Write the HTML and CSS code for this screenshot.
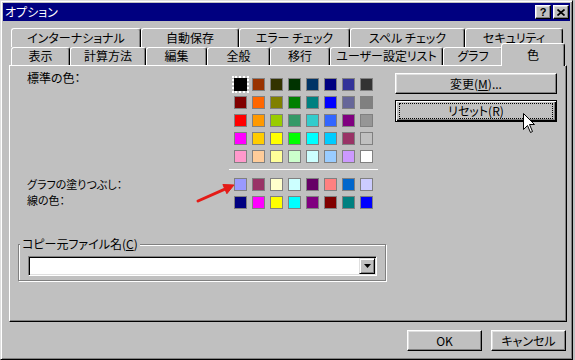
FILE: index.html
```html
<!DOCTYPE html>
<html lang="ja">
<head>
  <meta charset="UTF-8" />
  <title>オプション</title>
  <link rel="stylesheet" href="styles.css">
</head>
<body>
  <div class="window">
    <div class="titlebar">
      <span class="title">オプション</span>
      <div class="title-buttons">
        <span class="tb-btn help">?</span>
        <span class="tb-btn">
          <svg width="8" height="7" viewBox="0 0 8 7"><path d="M0.5 0.5L7.5 6.5M7.5 0.5L0.5 6.5" stroke="#000" stroke-width="1.7"/></svg>
        </span>
      </div>
    </div>

    <div class="tabs">
      <div class="tab-row row-back">
        <div class="tab">インターナショナル</div>
        <div class="tab">自動保存</div>
        <div class="tab">エラー チェック</div>
        <div class="tab">スペル チェック</div>
        <div class="tab">セキュリティ</div>
      </div>
      <div class="tab-row row-front">
        <div class="tab">表示</div>
        <div class="tab">計算方法</div>
        <div class="tab">編集</div>
        <div class="tab">全般</div>
        <div class="tab">移行</div>
        <div class="tab">ユーザー設定リスト</div>
        <div class="tab">グラフ</div>
        <div class="tab active">色</div>
      </div>
    </div>

    <div class="panel">
      <div class="std">
        <div class="label-col">標準の色：</div>
        <div class="swatches">
          <span class="sw sel" style="background:#000000"></span>
          <span class="sw" style="background:#993300"></span>
          <span class="sw" style="background:#333300"></span>
          <span class="sw" style="background:#003300"></span>
          <span class="sw" style="background:#003366"></span>
          <span class="sw" style="background:#000080"></span>
          <span class="sw" style="background:#333399"></span>
          <span class="sw" style="background:#333333"></span>
          <span class="sw" style="background:#800000"></span>
          <span class="sw" style="background:#ff6600"></span>
          <span class="sw" style="background:#808000"></span>
          <span class="sw" style="background:#008000"></span>
          <span class="sw" style="background:#008080"></span>
          <span class="sw" style="background:#0000ff"></span>
          <span class="sw" style="background:#666699"></span>
          <span class="sw" style="background:#808080"></span>
          <span class="sw" style="background:#ff0000"></span>
          <span class="sw" style="background:#ff9900"></span>
          <span class="sw" style="background:#99cc00"></span>
          <span class="sw" style="background:#339966"></span>
          <span class="sw" style="background:#33cccc"></span>
          <span class="sw" style="background:#3366ff"></span>
          <span class="sw" style="background:#800080"></span>
          <span class="sw" style="background:#969696"></span>
          <span class="sw" style="background:#ff00ff"></span>
          <span class="sw" style="background:#ffcc00"></span>
          <span class="sw" style="background:#ffff00"></span>
          <span class="sw" style="background:#00ff00"></span>
          <span class="sw" style="background:#00ffff"></span>
          <span class="sw" style="background:#00ccff"></span>
          <span class="sw" style="background:#993366"></span>
          <span class="sw" style="background:#c0c0c0"></span>
          <span class="sw" style="background:#ff99cc"></span>
          <span class="sw" style="background:#ffcc99"></span>
          <span class="sw" style="background:#ffff99"></span>
          <span class="sw" style="background:#ccffcc"></span>
          <span class="sw" style="background:#ccffff"></span>
          <span class="sw" style="background:#99ccff"></span>
          <span class="sw" style="background:#cc99ff"></span>
          <span class="sw" style="background:#ffffff"></span>
        </div>
        <div class="side">
          <button class="btn">変更(<u>M</u>)...</button>
          <button class="btn default"><span class="focus">リセット(R)</span></button>
        </div>
      </div>

      <div class="divider"></div>

      <div class="chart">
        <div class="label-col">
          <div>グラフの塗りつぶし：</div>
          <div>線の色：</div>
        </div>
        <div class="swatches">
          <span class="sw" style="background:#9999ff"></span>
          <span class="sw" style="background:#993366"></span>
          <span class="sw" style="background:#ffffcc"></span>
          <span class="sw" style="background:#ccffff"></span>
          <span class="sw" style="background:#660066"></span>
          <span class="sw" style="background:#ff8080"></span>
          <span class="sw" style="background:#0066cc"></span>
          <span class="sw" style="background:#ccccff"></span>
          <span class="sw" style="background:#000080"></span>
          <span class="sw" style="background:#ff00ff"></span>
          <span class="sw" style="background:#ffff00"></span>
          <span class="sw" style="background:#00ffff"></span>
          <span class="sw" style="background:#800080"></span>
          <span class="sw" style="background:#800000"></span>
          <span class="sw" style="background:#008080"></span>
          <span class="sw" style="background:#0000ff"></span>
        </div>
      </div>

      <div class="group">
        <span class="group-label">コピー元ファイル名(<u>C</u>)</span>
        <div class="combo">
          <span class="combo-btn">
            <svg width="7" height="4" viewBox="0 0 7 4"><path d="M0 0H7L3.5 4Z" fill="#000"/></svg>
          </span>
        </div>
      </div>

      <!-- red annotation arrow -->
      <svg class="note-arrow" width="50" height="32" viewBox="0 0 50 32">
        <path d="M8 25L36 12.6" stroke="#e41b17" stroke-width="3" stroke-linecap="round"/>
        <path d="M44 9L36.9 17.7L32.9 8.5Z" fill="#e41b17" stroke="#e41b17" stroke-width="1" stroke-linejoin="round"/>
      </svg>

      <svg class="cursor" width="13" height="21" viewBox="0 0 13 21">
        <path d="M0.5 0.5V16.5L4.5 12.5L7.5 19.5L9.5 18.5L6.5 11.5H11.5Z" fill="#fff" stroke="#000" stroke-width="1" stroke-linejoin="miter"/>
      </svg>
    </div>

    <div class="footer">
      <button class="btn">OK</button>
      <button class="btn">キャンセル</button>
    </div>
  </div>
</body>
</html>
```

FILE: styles.css
```css
body {
  margin: 0;
  background: #c0c0c0;
  font-family: "Noto Sans CJK JP", "Noto Sans", sans-serif;
  font-size: 12px;
  font-feature-settings: "palt";
  color: #000;
}
.window {
  width: 573px;
  height: 360px;
  box-sizing: border-box;
  border: 1px solid;
  border-color: #dfdfdf #000 #000 #dfdfdf;
  box-shadow: inset 1px 1px #fff, inset -1px -1px #808080;
  padding: 2px;
  background: #c0c0c0;
}
.titlebar {
  height: 18px;
  background: #000080;
  color: #fff;
  display: flex;
  align-items: center;
  justify-content: space-between;
  padding: 0 1px 0 2px;
}
.title {
  line-height: 18px;
}
.title-buttons {
  display: flex;
  gap: 2px;
}
.tb-btn {
  width: 16px;
  height: 14px;
  box-sizing: border-box;
  border: 1px solid;
  border-color: #fff #000 #000 #fff;
  box-shadow: inset -1px -1px #808080, inset 1px 1px #dfdfdf;
  background: #c0c0c0;
  display: flex;
  align-items: center;
  justify-content: center;
}
.tb-btn.help {
  color: #000;
  font-family: "Liberation Sans", Arial, sans-serif;
  font-weight: bold;
  font-size: 11px;
  line-height: 12px;
}

/* tabs */
.tabs {
  margin: 7px 0 0 8px;
}
.tab-row {
  display: grid;
  width: 552px;
}
.row-back {
  grid-template-columns: 130px 98px 111px 115px 98px;
  height: 19px;
}
.row-front {
  grid-template-columns: 59px 76px 61px 63px 60px 113px 60px 60px;
  height: 18px;
}
.tab {
  box-sizing: border-box;
  border: 1px solid;
  border-bottom: none;
  border-color: #fff #000 #000 #fff;
  box-shadow: inset -1px 0 #808080;
  border-radius: 3px 3px 0 0;
  background: #c0c0c0;
  text-align: center;
  white-space: nowrap;
}
.row-back .tab {
  line-height: 17px;
}
.row-front .tab {
  line-height: 15px;
}
.row-front .tab.active {
  margin: -4px -2px -1px;
  line-height: 21px;
  position: relative;
  z-index: 2;
}

/* page */
.panel {
  position: relative;
  width: 558px;
  height: 257px;
  margin-left: 6px;
  box-sizing: border-box;
  border: 1px solid;
  border-color: #fff #000 #000 #fff;
  box-shadow: inset -1px -1px #808080;
}
.std, .chart {
  display: flex;
  align-items: flex-start;
}
.label-col {
  width: 207px;
  padding-left: 17px;
  line-height: 15px;
  white-space: nowrap;
}
.std .label-col {
  margin-top: 4px;
}
.chart .label-col {
  margin-top: -2px;
  font-size: 11px;
  line-height: 16px;
}
.swatches {
  display: grid;
  grid-template-columns: repeat(8, 13px);
  grid-auto-rows: 13px;
  gap: 5px;
}
.std .swatches {
  margin-top: 12px;
}
.sw {
  box-sizing: border-box;
  border: 1px solid #808080;
}
.sw.sel {
  border-color: #000;
  outline: 2px dotted #fff;
  outline-offset: 0;
}
.side {
  width: 162px;
  margin: 7px 0 0 22px;
  display: flex;
  flex-direction: column;
  gap: 6px;
}
.btn {
  font: inherit;
  color: #000;
  background: #c0c0c0;
  height: 21px;
  box-sizing: border-box;
  padding: 0;
  border: 1px solid;
  border-color: #fff #000 #000 #fff;
  box-shadow: inset -1px -1px #808080, inset 1px 1px #dfdfdf;
  line-height: 17px;
}
.btn.default {
  height: 22px;
  padding: 2px 3px;
  border-color: #000;
  box-shadow: inset 1px 1px #fff, inset -1px -1px #000, inset -2px -2px #808080;
}
.focus {
  display: block;
  border: 1px dotted #000;
  line-height: 14px;
}
.divider {
  width: 149px;
  height: 1px;
  margin: 6px 0 0 219px;
  background: #fff;
}
.chart {
  margin-top: 8px;
}
.group {
  position: relative;
  width: 368px;
  margin: 35px 0 0 8px;
  box-sizing: border-box;
  border: 1px solid #808080;
  box-shadow: inset 1px 1px #fff, 1px 1px #fff;
  padding: 11px 0 4px 9px;
}
.group-label {
  position: absolute;
  top: -8px;
  left: 1px;
  padding: 0 2px;
  line-height: 14px;
  background: #c0c0c0;
}
.combo {
  width: 349px;
  height: 20px;
  box-sizing: border-box;
  border: 1px solid;
  border-color: #808080 #fff #fff #808080;
  box-shadow: inset 1px 1px #000, inset -1px -1px #dfdfdf;
  background: #fff;
  padding: 1px;
  display: flex;
  justify-content: flex-end;
}
.combo-btn {
  width: 16px;
  height: 16px;
  box-sizing: border-box;
  border: 1px solid;
  border-color: #dfdfdf #000 #000 #dfdfdf;
  box-shadow: inset 1px 1px #fff, inset -1px -1px #808080;
  background: #c0c0c0;
  display: flex;
  align-items: center;
  justify-content: center;
}
.note-arrow {
  position: absolute;
  left: 180px;
  top: 110px;
}
.cursor {
  position: absolute;
  left: 513px;
  top: 47px;
}
.footer {
  display: flex;
  justify-content: flex-end;
  gap: 9px;
  margin-top: 8px;
  padding-right: 4px;
}
.footer .btn {
  width: 75px;
}
```
